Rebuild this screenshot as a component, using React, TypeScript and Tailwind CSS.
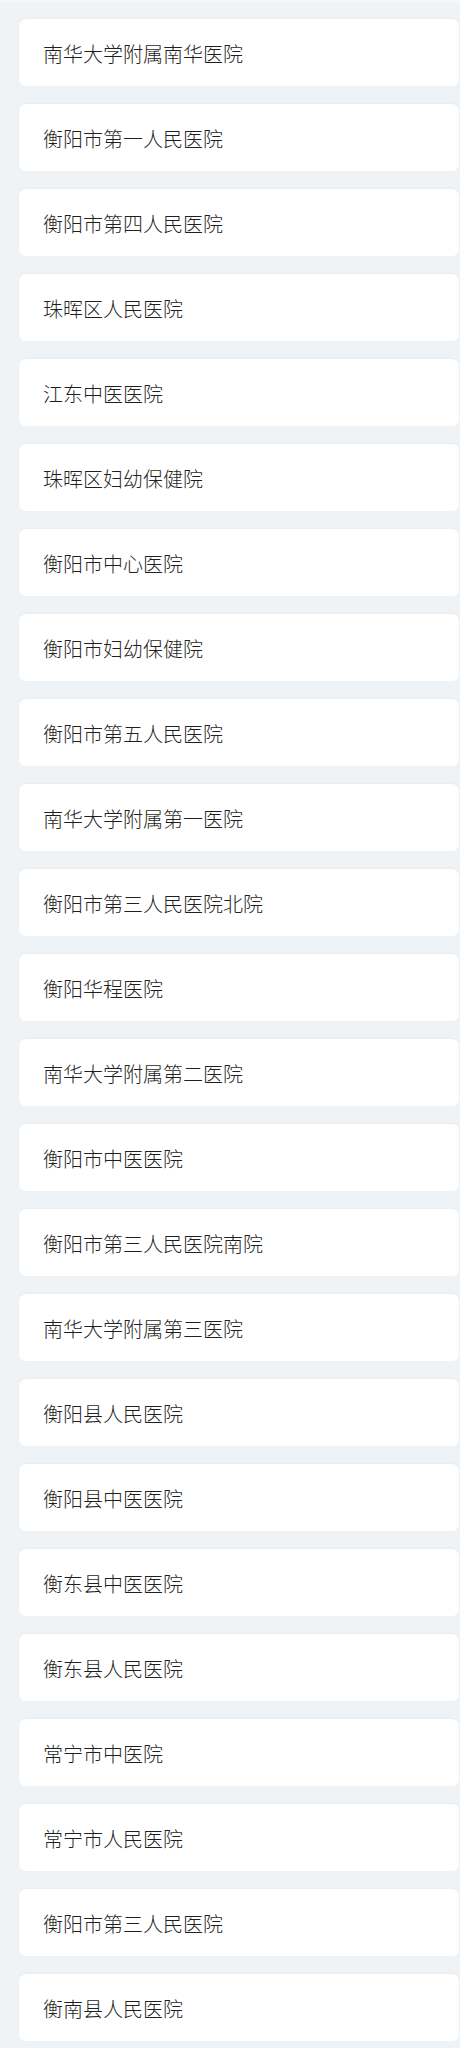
import React from "react";

const items = [
  "南华大学附属南华医院",
  "衡阳市第一人民医院",
  "衡阳市第四人民医院",
  "珠晖区人民医院",
  "江东中医医院",
  "珠晖区妇幼保健院",
  "衡阳市中心医院",
  "衡阳市妇幼保健院",
  "衡阳市第五人民医院",
  "南华大学附属第一医院",
  "衡阳市第三人民医院北院",
  "衡阳华程医院",
  "南华大学附属第二医院",
  "衡阳市中医医院",
  "衡阳市第三人民医院南院",
  "南华大学附属第三医院",
  "衡阳县人民医院",
  "衡阳县中医医院",
  "衡东县中医医院",
  "衡东县人民医院",
  "常宁市中医院",
  "常宁市人民医院",
  "衡阳市第三人民医院",
  "衡南县人民医院",
];

export default function App() {
  return (
    <div
      className="min-h-[2048px] w-[460px] bg-[#eff3f6]"
      style={{ fontFamily: '"Noto Sans CJK SC", "Noto Sans", sans-serif' }}
    >
      <div className="h-[2px] bg-[#f5f7f9]" />
      <div className="flex flex-col gap-[18px] pt-[17px] pl-[19px]">
        {items.map((name) => (
          <div
            key={name}
            className="flex h-[67px] w-[440px] items-center rounded-[7px] bg-white pl-[24px] text-[20px] font-light text-[#1f1f1f] shadow-[0_-1px_2px_rgba(0,0,0,0.03)]"
          >
            <span className="leading-none pt-[3px]">{name}</span>
          </div>
        ))}
      </div>
    </div>
  );
}
